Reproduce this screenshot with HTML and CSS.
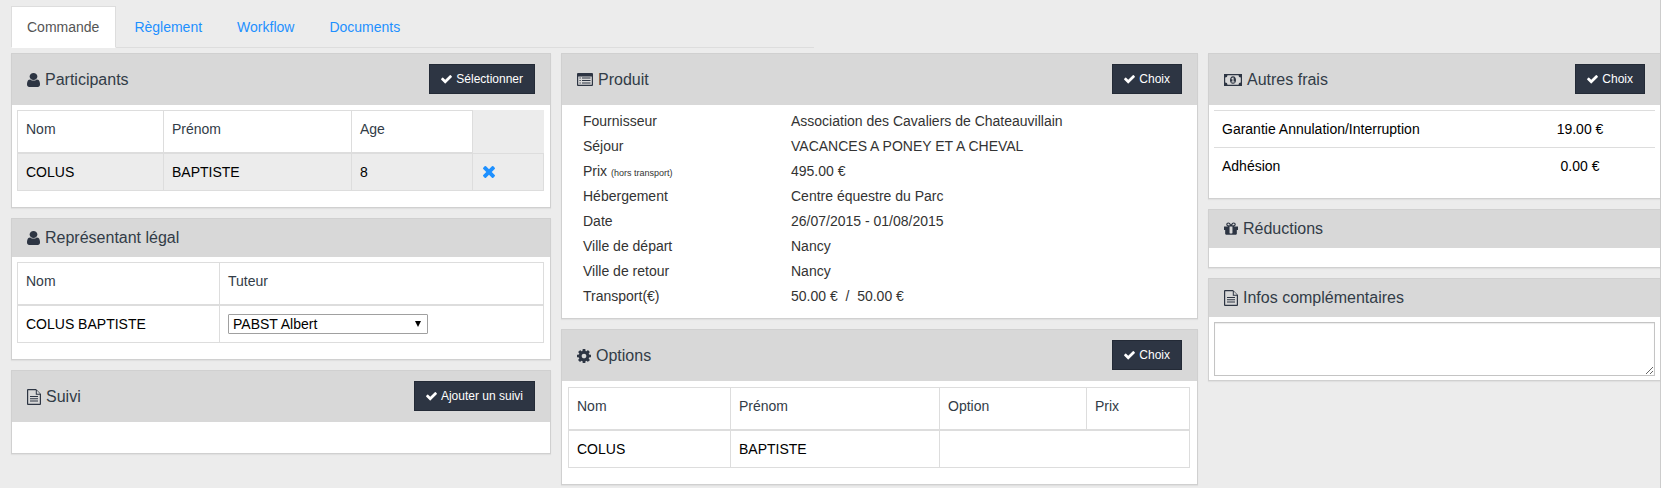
FILE: index.html
```html
<!DOCTYPE html>
<html lang="fr">
<head>
  <meta charset="UTF-8" />
  <meta name="viewport" content="width=device-width, initial-scale=1.0"/>
  <title>Commande</title>
  <link rel="stylesheet" href="styles.css">
</head>
<body>
  <!-- Icons -->
  <svg class="sprite" xmlns="http://www.w3.org/2000/svg" aria-hidden="true">
    <symbol id="i-user" viewBox="0 0 1280 1536" preserveAspectRatio="none">
      <path d="M1280 1271q0 109-62.500 187t-150.500 78h-854q-88 0-150.500-78t-62.500-187q0-85 8.500-160.500t31.500-152 58.500-131 94-89 134.500-34.500q131 128 313 128t313-128q76 0 134.500 34.500t94 89 58.500 131 31.500 152 8.500 160.500zm-256-887q0 159-112.500 271.500t-271.500 112.500-271.500-112.500-112.500-271.500 112.500-271.500 271.500-112.500 271.500 112.500 112.500 271.500z"/>
    </symbol>
    <symbol id="i-check" viewBox="121 180 1550 1430">
      <path d="M1671 566q0 40-28 68l-724 724-136 136q-28 28-68 28t-68-28l-136-136-362-362q-28-28-28-68t28-68l136-136q28-28 68-28t68 28l294 295 656-657q28-28 68-28t68 28l136 136q28 28 28 68z"/>
    </symbol>
    <symbol id="i-times" viewBox="302 366 1188 1188">
      <path d="M1490 1322q0 40-28 68l-136 136q-28 28-68 28t-68-28l-294-294-294 294q-28 28-68 28t-68-28l-136-136q-28-28-28-68t28-68l294-294-294-294q-28-28-28-68t28-68l136-136q28-28 68-28t68 28l294 294 294-294q28-28 68-28t68 28l136 136q28 28 28 68t-28 68l-294 294 294 294q28 28 28 68z"/>
    </symbol>
    <symbol id="i-cog" viewBox="128 128 1536 1536">
      <path d="M1152 896q0-106-75-181t-181-75-181 75-75 181 75 181 181 75 181-75 75-181zm512-109v222q0 12-8 23t-20 13l-185 28q-19 54-39 91 35 50 107 138 10 12 10 25t-9 23q-27 37-99 108t-94 71q-12 0-26-9l-138-108q-44 23-91 38-16 136-29 186-7 28-36 28h-222q-14 0-24.500-8.500t-11.500-21.500l-28-184q-49-16-90-37l-141 107q-10 9-25 9-14 0-25-11-126-114-165-168-7-10-7-23 0-12 8-23 15-21 51-66.500t54-70.500q-27-50-41-99l-183-27q-13-2-21-12.500t-8-23.500v-222q0-12 8-23t19-13l186-28q14-46 39-92-40-57-107-138-10-12-10-24 0-10 9-23 26-36 98.500-107.500t94.500-71.500q13 0 26 10l138 107q44-23 91-38 16-136 29-186 7-28 36-28h222q14 0 24.500 8.500t11.500 21.500l28 184q49 16 90 37l142-107q9-9 24-9 13 0 25 10 129 119 165 170 7 8 7 22 0 12-8 23-15 21-51 66.500t-54 70.500q26 50 41 98l183 28q13 2 21 12.500t8 23.500z"/>
    </symbol>
    <symbol id="i-file" viewBox="0 0 14 16">
      <path fill-rule="evenodd" d="M0 1q0-1 1-1h8l5 5v10q0 1-1 1h-12q-1 0-1-1zM1.200 1.200v13.600h11.600v-9h-4v-4.600zM9.800 1.500v3.300h3.200zM3 7h8v1h-8zM3 9.300h8v1h-8zM3 11.600h8v1h-8z"/>
    </symbol>
    <symbol id="i-list" viewBox="0 0 16 13">
      <path fill-rule="evenodd" d="M0 1q0-1 1-1h14q1 0 1 1v11q0 1-1 1h-14q-1 0-1-1zM1.200 3.500v8.300h13.600v-8.300zM2.500 4.500h1.200v1h-1.200zM5 4.500h8.500v1h-8.500zM2.500 7h1.200v1h-1.200zM5 7h8.500v1h-8.500zM2.500 9.500h1.200v1h-1.200zM5 9.500h8.500v1h-8.500z"/>
    </symbol>
    <symbol id="i-money" viewBox="0 0 18 12">
      <path fill-rule="evenodd" d="M0 0h18v12h-18zM3.500 1.200q0 2.300-2.300 2.300v5q2.300 0 2.300 2.300h11q0-2.300 2.300-2.300v-5q-2.300 0-2.300-2.300zM9 2.200c4 0 4 7.600 0 7.600s-4-7.600 0-7.600zM8.700 3.500l-1.500 1.200.6.700.6-.4v2.500h-1v1h3.200v-1h-1v-4z"/>
    </symbol>
    <symbol id="i-gift" viewBox="128 192 1536 1344">
      <path d="M1056 1356v-716h-320v716q0 25 18 38.500t46 13.500h192q28 0 46-13.500t18-38.500zm-456-844h195l-126-161q-26-31-69-31-40 0-68 28t-28 68 28 68 68 28zm688-96q0-40-28-68t-68-28q-43 0-69 31l-125 161h194q40 0 68-28t28-68zm376 256v320q0 14-9 23t-23 9h-96v416q0 40-28 68t-68 28h-1088q-40 0-68-28t-28-68v-416h-96q-14 0-23-9t-9-23v-320q0-14 9-23t23-9h440q-93 0-158.500-65.500t-65.500-158.500 65.500-158.500 158.500-65.500q107 0 168 77l128 165 128-165q61-77 168-77 93 0 158.500 65.500t65.500 158.500-65.500 158.500-158.500 65.500h440q14 0 23 9t9 23z"/>
    </symbol>
  </svg>

  <div class="wrapper">
    <ul class="nav-tabs">
      <li class="active"><a href="#commande">Commande</a></li>
      <li><a href="#reglement">Règlement</a></li>
      <li><a href="#workflow">Workflow</a></li>
      <li><a href="#documents">Documents</a></li>
    </ul>

    <div class="columns" id="commande">
      <div class="column">
        <section class="panel">
          <div class="panel-heading">
            <h3><svg class="icon icon-user"><use href="#i-user"/></svg>Participants</h3>
            <button type="button" class="btn"><svg class="icon-check"><use href="#i-check"/></svg>Sélectionner</button>
          </div>
          <div class="panel-body">
            <table class="table bordered striped participants">
              <colgroup><col class="c-nom"><col class="c-prenom"><col class="c-age"><col></colgroup>
              <thead>
                <tr><th>Nom</th><th>Prénom</th><th>Age</th><td class="empty"></td></tr>
              </thead>
              <tbody>
                <tr>
                  <td>COLUS</td>
                  <td>BAPTISTE</td>
                  <td>8</td>
                  <td><button type="button" class="remove" aria-label="Supprimer"><svg><use href="#i-times"/></svg></button></td>
                </tr>
              </tbody>
            </table>
          </div>
        </section>

        <section class="panel">
          <div class="panel-heading">
            <h3><svg class="icon icon-user"><use href="#i-user"/></svg>Représentant légal</h3>
          </div>
          <div class="panel-body">
            <table class="table bordered tuteurs">
              <colgroup><col class="c-nom"><col></colgroup>
              <thead>
                <tr><th>Nom</th><th id="tuteur">Tuteur</th></tr>
              </thead>
              <tbody>
                <tr>
                  <td>COLUS BAPTISTE</td>
                  <td>
                    <div class="select">
                      <select aria-labelledby="tuteur">
                        <option>PABST Albert</option>
                      </select>
                    </div>
                  </td>
                </tr>
              </tbody>
            </table>
          </div>
        </section>

        <section class="panel">
          <div class="panel-heading">
            <h3><svg class="icon icon-file"><use href="#i-file"/></svg>Suivi</h3>
            <button type="button" class="btn"><svg class="icon-check"><use href="#i-check"/></svg>Ajouter un suivi</button>
          </div>
          <div class="panel-body suivi"></div>
        </section>
      </div>

      <div class="column">
        <section class="panel">
          <div class="panel-heading">
            <h3><svg class="icon icon-list"><use href="#i-list"/></svg>Produit</h3>
            <button type="button" class="btn"><svg class="icon-check"><use href="#i-check"/></svg>Choix</button>
          </div>
          <dl class="produit">
            <dt>Fournisseur</dt><dd>Association des Cavaliers de Chateauvillain</dd>
            <dt>Séjour</dt><dd>VACANCES A PONEY ET A CHEVAL</dd>
            <dt>Prix <small>(hors transport)</small></dt><dd>495.00 €</dd>
            <dt>Hébergement</dt><dd>Centre équestre du Parc</dd>
            <dt>Date</dt><dd>26/07/2015 - 01/08/2015</dd>
            <dt>Ville de départ</dt><dd>Nancy</dd>
            <dt>Ville de retour</dt><dd>Nancy</dd>
            <dt>Transport(€)</dt><dd>50.00 €&nbsp; /&nbsp; 50.00 €</dd>
          </dl>
        </section>

        <section class="panel">
          <div class="panel-heading">
            <h3><svg class="icon icon-cog"><use href="#i-cog"/></svg>Options</h3>
            <button type="button" class="btn"><svg class="icon-check"><use href="#i-check"/></svg>Choix</button>
          </div>
          <div class="panel-body options-body">
            <table class="table bordered options">
              <colgroup><col class="c-nom"><col class="c-prenom"><col class="c-option"><col></colgroup>
              <thead>
                <tr><th>Nom</th><th>Prénom</th><th>Option</th><th>Prix</th></tr>
              </thead>
              <tbody>
                <tr><td>COLUS</td><td>BAPTISTE</td><td colspan="2"></td></tr>
              </tbody>
            </table>
          </div>
        </section>
      </div>

      <div class="column last">
        <section class="panel">
          <div class="panel-heading">
            <h3><svg class="icon icon-money"><use href="#i-money"/></svg>Autres frais</h3>
            <button type="button" class="btn"><svg class="icon-check"><use href="#i-check"/></svg>Choix</button>
          </div>
          <div class="panel-body frais-body">
            <table class="table frais">
              <tbody>
                <tr><td>Garantie Annulation/Interruption</td><td class="prix">19.00 €</td></tr>
                <tr><td>Adhésion</td><td class="prix">0.00 €</td></tr>
              </tbody>
            </table>
          </div>
        </section>

        <section class="panel">
          <div class="panel-heading">
            <h3><svg class="icon icon-gift"><use href="#i-gift"/></svg>Réductions</h3>
          </div>
          <div class="panel-body reductions"></div>
        </section>

        <section class="panel">
          <div class="panel-heading">
            <h3><svg class="icon icon-file"><use href="#i-file"/></svg><label for="infos">Infos complémentaires</label></h3>
          </div>
          <div class="panel-body infos-body">
            <textarea id="infos"></textarea>
          </div>
        </section>
      </div>
    </div>
  </div>
</body>
</html>
```
FILE: styles.css
```css
:root {
  --page: #ececec;
  --heading: #d8d8d8;
  --panel-border: #d0d0d0;
  --line: #dddddd;
  --dark: #2d3543;
  --title: #323c47;
  --link: #1e90ff;
}

* {
  box-sizing: border-box;
}

body {
  margin: 0;
  background-color: #fff;
  color: #333;
  font-family: "Liberation Sans", Arial, sans-serif;
  font-size: 14px;
  line-height: 20px;
}

.sprite {
  display: none;
}

svg {
  fill: currentColor;
}

.wrapper {
  min-height: 100vh;
  margin-right: 7px;
  padding: 6px 0 3px 11px;
  background-color: var(--page);
  border-right: 1px solid #ccc;
}

/* Tabs */
.nav-tabs {
  display: flex;
  gap: 2px;
  width: 803px;
  max-width: 100%;
  margin: 0 0 5px;
  padding: 0;
  list-style: none;
  border-bottom: 1px solid var(--line);
}

.nav-tabs li {
  margin-bottom: -1px;
}

.nav-tabs a {
  display: block;
  padding: 10px 16px 10px 15px;
  border: 1px solid transparent;
  color: var(--link);
  text-decoration: none;
}

.nav-tabs .active a {
  background-color: #fff;
  border-color: var(--line);
  border-bottom-color: #fff;
  color: #555;
}

/* Layout */
.columns {
  display: grid;
  grid-template-columns: 540fr 637fr 452fr;
  gap: 10px;
  align-items: start;
}

.column {
  display: flex;
  flex-direction: column;
  gap: 10px;
  min-width: 0;
}

/* Panels */
.panel {
  background-color: #fff;
  border: 1px solid var(--panel-border);
  box-shadow: 0 1px 1px rgba(0, 0, 0, 0.05);
}

.last .panel {
  border-right: none;
}

.panel-heading {
  display: flex;
  align-items: center;
  justify-content: space-between;
  padding: 10px 15px;
  background-color: var(--heading);
  color: var(--title);
}

.panel-heading h3 {
  display: flex;
  align-items: center;
  gap: 5px;
  margin: 0;
  font-size: 16px;
  font-weight: 400;
  line-height: 18px;
}

.icon {
  color: var(--dark);
}

.icon-user {
  width: 13px;
  height: 14px;
}

.icon-file {
  width: 14px;
  height: 16px;
}

.icon-list {
  width: 16px;
  height: 13px;
}

.icon-cog {
  width: 14px;
  height: 14px;
}

.icon-money {
  width: 18px;
  height: 12px;
}

.icon-gift {
  width: 14px;
  height: 13px;
}

.btn {
  display: flex;
  align-items: center;
  gap: 4px;
  margin: 0 0 1px;
  padding: 5px 11px;
  background-color: var(--dark);
  border: 1px solid #232a36;
  color: #fff;
  font-family: inherit;
  font-size: 12px;
  line-height: 18px;
  cursor: pointer;
}

.icon-check {
  width: 11px;
  height: 10px;
}

.panel-body {
  padding: 5px 6px 16px 5px;
}

.options-body {
  padding: 6px 7px 16px 6px;
}

.suivi {
  padding: 15px;
  height: 31px;
}

.reductions {
  height: 19px;
  padding: 0;
}

.frais-body {
  padding: 5px 5px 13px;
}

.infos-body {
  padding: 5px 5px 4px;
}

/* Tables */
.table {
  width: 100%;
  border-collapse: collapse;
  table-layout: fixed;
  color: #000;
}

.table th,
.table td {
  padding: 8px;
  text-align: left;
  font-weight: 400;
  height: 37px;
}

.table th {
  padding-bottom: 13px;
  color: var(--title);
}

.bordered th,
.bordered td {
  border: 1px solid var(--line);
}

.bordered th {
  border-bottom-width: 2px;
}

.striped tbody tr {
  background-color: var(--page);
}

.table .empty {
  background-color: var(--page);
  border-top-color: var(--page);
  border-right-color: var(--page);
}

.participants .c-nom {
  width: 146px;
}

.participants .c-prenom {
  width: 188px;
}

.participants .c-age {
  width: 121px;
}

.tuteurs .c-nom {
  width: 202px;
}

.options .c-nom {
  width: 162px;
}

.options .c-prenom {
  width: 209px;
}

.options .c-option {
  width: 147px;
}

.frais td {
  border-top: 1px solid var(--line);
}

.frais td:first-child {
  width: 66%;
}

.frais .prix {
  text-align: center;
}

.remove {
  display: block;
  padding: 0 2px;
  background: none;
  border: none;
  color: var(--link);
  cursor: pointer;
}

.remove svg {
  display: block;
  width: 12px;
  height: 12px;
}

/* Product details */
.produit {
  display: grid;
  grid-template-columns: 208px 1fr;
  margin: 0;
  padding: 4px 5px 9px 21px;
  line-height: 25px;
}

.produit dd {
  margin: 0;
}

.produit small {
  font-size: 9px;
  line-height: 9px;
}

/* Form controls */
.select {
  position: relative;
  width: 200px;
  max-width: 100%;
}

.select select {
  display: block;
  width: 100%;
  height: 20px;
  padding: 0 20px 0 4px;
  appearance: none;
  background-color: #fff;
  border: 1px solid #a0a0a0;
  border-radius: 1px;
  color: #000;
  font-family: inherit;
  font-size: 14px;
}

.select::after {
  content: "";
  position: absolute;
  top: 7px;
  right: 7px;
  border: 3px solid transparent;
  border-top: 6px solid #000;
  border-bottom: 0;
  pointer-events: none;
}

textarea {
  display: block;
  width: 100%;
  height: 54px;
  border: 1px solid #c4c4c4;
  box-shadow: inset 0 1px 1px rgba(0, 0, 0, 0.08);
  font-family: inherit;
  font-size: 14px;
  resize: vertical;
}
```
